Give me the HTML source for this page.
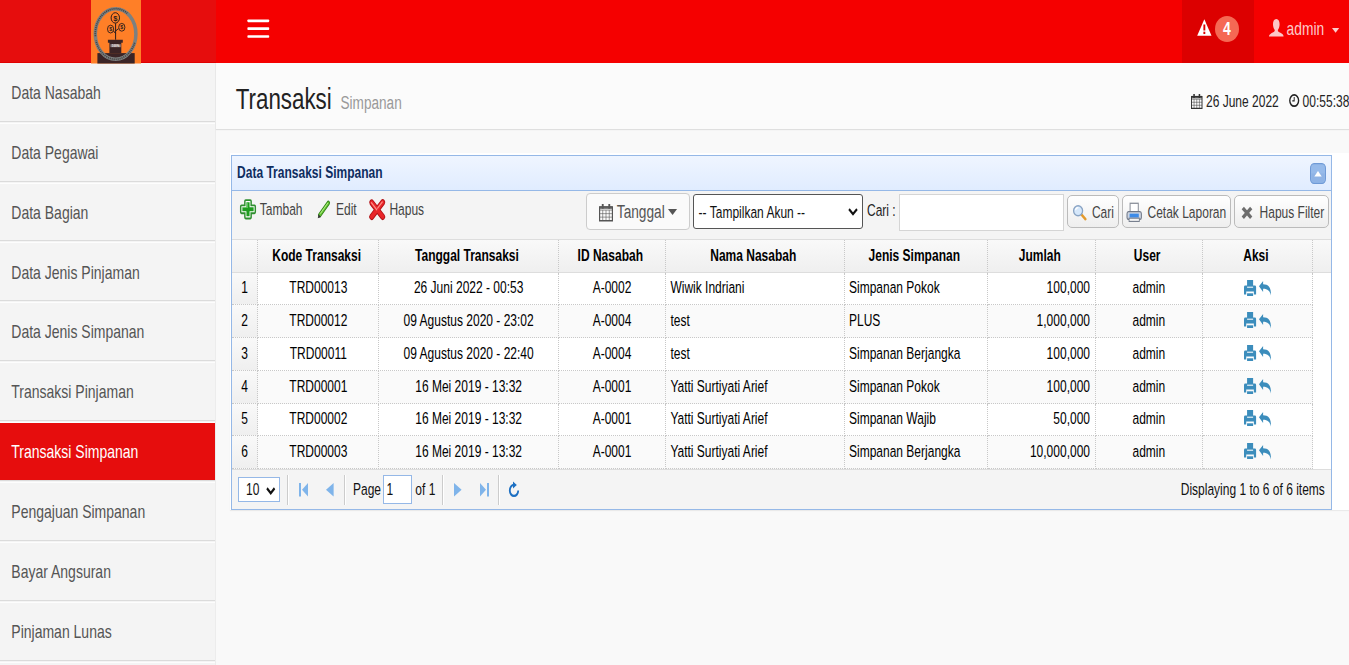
<!DOCTYPE html>
<html lang="id"><head><meta charset="utf-8"><title>Transaksi Simpanan</title>
<style>
html,body{margin:0;padding:0;background:#f9f9f9;overflow:hidden;width:1349px;height:665px}
body{font-family:"Liberation Sans",Arial,sans-serif;font-size:12px;color:#000}
#b{position:absolute;left:0;top:0;width:1349px;height:665px;overflow:hidden}
#w{position:absolute;left:0;top:0;width:1349px;height:508.13px;transform-origin:0 0;transform:scaleY(1.31);overflow:hidden}
.a{position:absolute;box-sizing:border-box}
.t{position:absolute;white-space:nowrap;line-height:1}
svg{position:absolute;overflow:visible}
.mi{position:absolute;box-sizing:border-box}
.cell{position:absolute;box-sizing:border-box;border-right:1px dotted #c8c8c8;border-bottom:1px dotted #c8c8c8}
.hd{border-bottom:1px solid #ddd}
.btn{position:absolute;box-sizing:border-box;border:1px solid #bbb;border-radius:5px;background:linear-gradient(#fff,#eee)}
.sep{position:absolute;box-sizing:border-box;border-left:1px solid #ccc;border-right:1px solid #fff}
</style></head><body>
<div id="b">
<div class="a" style="left:0px;top:0px;width:216px;height:62.5px;background:#e60d0d;border-bottom:1px solid #e00000"></div>
<div class="a" style="left:216px;top:0px;width:1133px;height:62.5px;background:#f50000"></div>
<div class="a" style="left:1182px;top:0px;width:71.5px;height:62.5px;background:#dc0000"></div>
<svg style="left:247px;top:0px" width="23" height="62" viewBox="247 0 23 62" preserveAspectRatio="none"><rect x="247.4" y="19.45" width="21.8" height="2.7" rx=".8" fill="#fff"/><rect x="247.4" y="27.299999999999997" width="21.8" height="2.7" rx=".8" fill="#fff"/><rect x="247.4" y="35.15" width="21.8" height="2.7" rx=".8" fill="#fff"/></svg>
<div class="a" style="left:0px;top:62.5px;width:215.3px;height:604.5px;background:#f4f4f4"></div>
<div class="a" style="left:215.3px;top:62.5px;width:1.0px;height:604.5px;background:#ececec"></div>
<div class="a" style="left:0px;top:120.76px;width:215.3px;height:1.0px;background:#dbdbdb"></div>
<div class="a" style="left:0px;top:122.76px;width:215.3px;height:1.0px;background:#fdfdfd"></div>
<div class="a" style="left:0px;top:180.62px;width:215.3px;height:1.0px;background:#dbdbdb"></div>
<div class="a" style="left:0px;top:182.62px;width:215.3px;height:1.0px;background:#fdfdfd"></div>
<div class="a" style="left:0px;top:240.48px;width:215.3px;height:1.0px;background:#dbdbdb"></div>
<div class="a" style="left:0px;top:242.48px;width:215.3px;height:1.0px;background:#fdfdfd"></div>
<div class="a" style="left:0px;top:300.34px;width:215.3px;height:1.0px;background:#dbdbdb"></div>
<div class="a" style="left:0px;top:302.34px;width:215.3px;height:1.0px;background:#fdfdfd"></div>
<div class="a" style="left:0px;top:360.2px;width:215.3px;height:1.0px;background:#dbdbdb"></div>
<div class="a" style="left:0px;top:362.2px;width:215.3px;height:1.0px;background:#fdfdfd"></div>
<div class="a" style="left:0px;top:420.06px;width:215.3px;height:1.0px;background:#dbdbdb"></div>
<div class="a" style="left:0px;top:422.06px;width:215.3px;height:1.0px;background:#fdfdfd"></div>
<div class="a" style="left:0px;top:423.06px;width:215.3px;height:56.86px;background:#e60d0d"></div>
<div class="a" style="left:0px;top:479.92px;width:215.3px;height:1.0px;background:#dbdbdb"></div>
<div class="a" style="left:0px;top:481.92px;width:215.3px;height:1.0px;background:#fdfdfd"></div>
<div class="a" style="left:0px;top:539.78px;width:215.3px;height:1.0px;background:#dbdbdb"></div>
<div class="a" style="left:0px;top:541.78px;width:215.3px;height:1.0px;background:#fdfdfd"></div>
<div class="a" style="left:0px;top:599.64px;width:215.3px;height:1.0px;background:#dbdbdb"></div>
<div class="a" style="left:0px;top:601.64px;width:215.3px;height:1.0px;background:#fdfdfd"></div>
<div class="a" style="left:0px;top:659.5px;width:215.3px;height:1.0px;background:#dbdbdb"></div>
<div class="a" style="left:0px;top:661.5px;width:215.3px;height:1.0px;background:#fdfdfd"></div>
<div class="a" style="left:0px;top:719.36px;width:215.3px;height:1.0px;background:#dbdbdb"></div>
<div class="a" style="left:0px;top:721.36px;width:215.3px;height:1.0px;background:#fdfdfd"></div>
<svg style="left:91px;top:0px" width="50" height="63.5" viewBox="0 0 50 63.5" preserveAspectRatio="none"><rect width="50" height="63.5" fill="#ff7f27"/><rect x="6.4" y="53.1" width="37.3" height="10.4" fill="#3b2426"/><ellipse cx="24.6" cy="34" rx="20.3" ry="25.3" fill="none" stroke="#7d8080" stroke-width="3.5"/><path d="M4.38 36.21L4.30 33.82L4.41 31.43L4.69 29.06L5.15 26.74L5.79 24.49L6.59 22.32L7.56 20.25L8.68 18.31L9.94 16.50L11.33 14.86L12.84 13.38L14.45 12.09L16.15 10.99L17.94 10.10L19.77 9.43L21.66 8.97L23.57 8.73L25.49 8.72L27.40 8.94L29.28 9.38L31.13 10.04L32.91 10.92L34.62 12.00L36.24 13.28" fill="none" stroke="#2e2a2a" stroke-width="1.7" stroke-dasharray="1.1 .9" opacity=".7"/><path d="M43.68 42.65L42.84 45.11L41.80 47.44L40.57 49.62L39.16 51.63L37.59 53.44L35.88 55.04L34.04 56.40L32.09 57.51L30.07 58.37L27.98 58.95L25.85 59.25L23.71 59.28L21.58 59.02L19.49 58.48L17.45 57.68L15.49 56.61L13.63 55.29L11.89 53.73L10.30 51.95L8.86 49.98L7.60 47.83L6.53 45.52L5.65 43.08L4.99 40.55" fill="none" stroke="#2e2a2a" stroke-width="1.7" stroke-dasharray="1.1 .9" opacity=".7"/><path d="M16.900 39.700h14.900v3h-1.500v10.400H18.400V42.700h-1.500z" fill="#3b2426"/><path d="M24.600 39.700V23.300M24.600 33.500l-2.500-3M24.600 31l3-2.500" stroke="#2a1c1c" stroke-width="1" fill="none"/><ellipse cx="24.3" cy="17.9" rx="4.2" ry="5.2" fill="#ff7f27" stroke="#2a1c1c" stroke-width="1"/><ellipse cx="19.6" cy="29.1" rx="3.1" ry="3.9" fill="#ff7f27" stroke="#2a1c1c" stroke-width=".9"/><ellipse cx="30.8" cy="27.3" rx="3.1" ry="3.9" fill="#ff7f27" stroke="#2a1c1c" stroke-width=".9"/><text x="24.3" y="20.6" font-size="7.5" font-weight="bold" text-anchor="middle" fill="#2a1c1c" font-family="Liberation Sans">$</text><text x="19.6" y="31" font-size="5.2" font-weight="bold" text-anchor="middle" fill="#2a1c1c" font-family="Liberation Sans">$</text><text x="30.8" y="29.2" font-size="5.2" font-weight="bold" text-anchor="middle" fill="#2a1c1c" font-family="Liberation Sans">$</text><rect x="19.4" y="44.2" width="10.4" height="3" fill="#a89a9a" opacity=".75"/><text x="24.6" y="46.900" font-size="3" font-weight="bold" text-anchor="middle" fill="#f4eeee" font-family="Liberation Sans">100%</text></svg>
<svg style="left:1196.7px;top:19.2px" width="14.7" height="17.0" viewBox="0 0 14.7 13" preserveAspectRatio="none"><path d="M7.35 0.2L14.5 12.8H0.2z" fill="#fff"/><rect x="6.4" y="4.2" width="1.9" height="4.6" fill="#dc0000"/><rect x="6.4" y="9.7" width="1.9" height="1.8" fill="#dc0000"/></svg>
<div class="a" style="left:1215px;top:15.6px;width:24px;height:26.0px;border-radius:12px/13px;background:#f56954"></div>
<svg style="left:1268.6px;top:18.9px" width="14.6" height="17.6" viewBox="0 0 14.6 13.6" preserveAspectRatio="none"><path d="M7.3 0C9.6 0 10.6 1.8 10.6 4c0 2-.9 3.600-1.800 4.500c0 1.200 1 1.600 2.600 2.200c1.800.7 3.200 1.300 3.200 2.900H0c0-1.600 1.400-2.200 3.200-2.900C4.800 10.100 5.800 9.700 5.800 8.500C4.900 7.600 4 6 4 4C4 1.800 5 0 7.300 0z" fill="#fff" opacity=".78"/></svg>
<svg style="left:1331.8px;top:27.5px" width="7.2" height="4.7" viewBox="0 0 8 4" preserveAspectRatio="none"><path d="M0 0h8L4 4z" fill="#fff" opacity=".8"/></svg>
<div class="a" style="left:216.3px;top:62.5px;width:1132.7px;height:66.7px;background:#fbfbfb;box-shadow:0 1px 1px rgba(0,0,0,.1)"></div>
<svg style="left:1191px;top:94px" width="11.5" height="15" viewBox="0 0 12 12" preserveAspectRatio="none"><path d="M0.500 2h11v9.500h-11z" fill="none" stroke="#333" stroke-width="1"/><path d="M0.500 4.200h11M0.500 6.600h11M0.500 9h11M3.200 4.200v7.300M6 4.200v7.300M8.800 4.200v7.300" stroke="#333" stroke-width=".45"/><rect x="0.500" y="1.500" width="11" height="2" fill="#333" opacity=".75"/><rect x="2.400" y="0" width="1.600" height="3.200" fill="#333"/><rect x="8" y="0" width="1.600" height="3.200" fill="#333"/></svg>
<svg style="left:1288.6px;top:94.4px" width="10.4" height="13.2" viewBox="0 0 12 12" preserveAspectRatio="none"><circle cx="6" cy="6" r="5.100" fill="none" stroke="#222" stroke-width="1.600"/><path d="M6 2.800v3.500H3.800" fill="none" stroke="#222" stroke-width="1.100"/></svg>
<div class="a" style="left:230px;top:153.2px;width:1119px;height:357.1px;background:#fff;box-shadow:0 1px 1px rgba(0,0,0,.06)"></div>
<div class="a" style="left:231.2px;top:154.85px;width:1100.7px;height:355.0px;border:1px solid #95b8e7;background:#fff"></div>
<div class="a" style="left:232.2px;top:155.85px;width:1098.7px;height:35.3px;background:linear-gradient(#eff5ff,#e0ecff);border-bottom:1px solid #95b8e7"></div>
<svg style="left:1310px;top:162.8px" width="16" height="21.0" viewBox="0 0 16 16" preserveAspectRatio="none"><rect x=".5" y=".5" width="15" height="15" rx="3.500" fill="#96baea" stroke="#6f9ad6"/><path d="M1.500 8h13v4.500a2 2 0 0 1-2 2h-9a2 2 0 0 1-2-2z" fill="#8cb0e2" opacity=".7"/><path d="M4.300 10.300L8 6l3.700 4.300z" fill="#fff"/></svg>
<div class="a" style="left:232.2px;top:191.15px;width:1098.7px;height:49.0px;background:#f4f4f4;border-bottom:1px solid #ddd"></div>
<svg style="left:238.6px;top:198.4px" width="18.0" height="22.6" viewBox="0 0 16 16" preserveAspectRatio="none"><path d="M6 1.500h4a.8.8 0 0 1 .8.800V5.200h2.900a.8.8 0 0 1 .8.800v4a.8.8 0 0 1-.8.800h-2.900v2.900a.8.8 0 0 1-.8.800H6a.8.8 0 0 1-.8-.800v-2.900H2.300a.8.8 0 0 1-.8-.800V6a.8.8 0 0 1 .8-.800h2.900V2.300A.8.8 0 0 1 6 1.500z" fill="#fff" stroke="#2f8f2f" stroke-width="1.300"/><path d="M6.600 3h2.800v3.600H13v2.800H9.400V13H6.600V9.400H3V6.600h3.600z" fill="#1f9c1f"/><path d="M7 3.400h1v3.600H3.400v-.4H7z" fill="#7fe07a" opacity=".6"/></svg>
<svg style="left:316.3px;top:198.8px" width="16.0" height="21.0" viewBox="0 0 16 16" preserveAspectRatio="none"><path d="M3.800 12.200L12.300 3" stroke="#2d7d16" stroke-width="3.400" stroke-linecap="round"/><path d="M3.800 12.200L12.300 3" stroke="#62c332" stroke-width="2" stroke-linecap="round"/><path d="M4.300 11.200L11.800 3.100" stroke="#c9f59e" stroke-width=".7"/><path d="M1.800 14.600l.8-3 2.300 2.100z" fill="#333"/></svg>
<svg style="left:368.4px;top:198px" width="18.4" height="22.8" viewBox="0 0 16 16" preserveAspectRatio="none"><path d="M3.200 3.200l9.600 10M12.800 3l-9.600 10.200" stroke="#b01116" stroke-width="4.400" stroke-linecap="round"/><path d="M3.200 3.200l9.600 10M12.800 3l-9.600 10.200" stroke="#e8262a" stroke-width="3" stroke-linecap="round"/><path d="M3 3.400l4.600 4.800M12.400 2.800l-4 4.300" stroke="#ff8d85" stroke-width="1" stroke-linecap="round"/></svg>
<div class="a" style="left:586.4px;top:193.3px;width:103.2px;height:37.2px;border:1px solid #ccc;border-radius:4px;background:#fafafa"></div>
<svg style="left:598.5px;top:203.5px" width="14.0" height="17.5" viewBox="0 0 12 12" preserveAspectRatio="none"><path d="M0.500 2h11v9.500h-11z" fill="none" stroke="#555" stroke-width="1"/><path d="M0.500 4.200h11M0.500 6.600h11M0.500 9h11M3.200 4.200v7.300M6 4.200v7.300M8.800 4.200v7.300" stroke="#555" stroke-width=".45"/><rect x="0.500" y="1.500" width="11" height="2" fill="#555" opacity=".75"/><rect x="2.400" y="0" width="1.600" height="3.200" fill="#555"/><rect x="8" y="0" width="1.600" height="3.200" fill="#555"/></svg>
<svg style="left:668.2px;top:209.4px" width="9.1" height="6.0" viewBox="0 0 8 4" preserveAspectRatio="none"><path d="M0 0h8L4 4z" fill="#555"/></svg>
<div class="a" style="left:693.4px;top:194px;width:169.6px;height:34.9px;border:1px solid #555;border-radius:3px;background:#fff"></div>
<svg style="left:848px;top:207.5px" width="10" height="7.2" viewBox="0 0 10 6" preserveAspectRatio="none"><path d="M1 1l4 4 4-4" fill="none" stroke="#111" stroke-width="2"/></svg>
<div class="a" style="left:899px;top:194.3px;width:164.6px;height:36.3px;border:1px solid #d5d5d5;background:#fff"></div>
<div class="btn" style="left:1066.8px;top:195px;width:51.8px;height:33.4px;"></div>
<div class="btn" style="left:1122px;top:195px;width:108.7px;height:33.4px;"></div>
<div class="btn" style="left:1234px;top:195px;width:94.8px;height:33.4px;"></div>
<svg style="left:1072.4px;top:203.9px" width="15.0" height="16.7" viewBox="0 0 16 16" preserveAspectRatio="none"><path d="M9.500 9.500l4.800 5" stroke="#e39a2c" stroke-width="2.600" stroke-linecap="round"/><circle cx="6.500" cy="6.500" r="4.800" fill="#d6e8fb" stroke="#8aa4c4" stroke-width="1.400"/><path d="M3.800 6a3 3 0 0 1 3-2.600" stroke="#fff" stroke-width="1.200" fill="none"/></svg>
<svg style="left:1126.4px;top:201.7px" width="16.4" height="20.7" viewBox="0 0 16 16" preserveAspectRatio="none"><rect x="4" y="1" width="8" height="7" fill="#fff" stroke="#8a8f99" stroke-width="1"/><rect x="1" y="7.500" width="14" height="6" rx="1.500" fill="#cfd6e2" stroke="#6d7686" stroke-width="1"/><rect x="3.500" y="9" width="9" height="3" fill="#3d8be8"/><rect x="3" y="12.500" width="10" height="2.500" fill="#f4f4f4" stroke="#6d7686" stroke-width=".8"/></svg>
<svg style="left:1241px;top:205.5px" width="12" height="13.8" viewBox="0 0 12 12" preserveAspectRatio="none"><path d="M1.800 1.800l8.400 8.400M10.200 1.800l-8.400 8.400" stroke="#6e6e6e" stroke-width="3.200"/></svg>
<div class="a" style="left:232.2px;top:240.15px;width:1098.7px;height:32.48px;background:linear-gradient(#f9f9f9,#efefef);border-bottom:1px solid #ddd"></div>
<div class="cell hd" style="left:232.2px;top:240.15px;width:26.0px;height:32.48px;"></div>
<div class="cell hd" style="left:258.2px;top:240.15px;width:121.3px;height:32.48px;"></div>
<div class="cell hd" style="left:379.5px;top:240.15px;width:179.3px;height:32.48px;"></div>
<div class="cell hd" style="left:558.8px;top:240.15px;width:107.4px;height:32.48px;"></div>
<div class="cell hd" style="left:666.2px;top:240.15px;width:178.6px;height:32.48px;"></div>
<div class="cell hd" style="left:844.8px;top:240.15px;width:143.4px;height:32.48px;"></div>
<div class="cell hd" style="left:988.2px;top:240.15px;width:107.5px;height:32.48px;"></div>
<div class="cell hd" style="left:1095.7px;top:240.15px;width:107.3px;height:32.48px;"></div>
<div class="cell hd" style="left:1203.0px;top:240.15px;width:110.3px;height:32.48px;"></div>
<div class="a" style="left:232.2px;top:272.63px;width:1081.1px;height:32.72px;background:#fff"></div>
<div class="cell" style="left:232.2px;top:272.63px;width:26.0px;height:32.72px;background:linear-gradient(#f9f9f9,#efefef)"></div>
<div class="cell" style="left:258.2px;top:272.63px;width:121.3px;height:32.72px;"></div>
<div class="cell" style="left:379.5px;top:272.63px;width:179.3px;height:32.72px;"></div>
<div class="cell" style="left:558.8px;top:272.63px;width:107.4px;height:32.72px;"></div>
<div class="cell" style="left:666.2px;top:272.63px;width:178.6px;height:32.72px;"></div>
<div class="cell" style="left:844.8px;top:272.63px;width:143.4px;height:32.72px;"></div>
<div class="cell" style="left:988.2px;top:272.63px;width:107.5px;height:32.72px;"></div>
<div class="cell" style="left:1095.7px;top:272.63px;width:107.3px;height:32.72px;"></div>
<div class="cell" style="left:1203.0px;top:272.63px;width:110.3px;height:32.72px;"></div>
<svg style="left:1243.8px;top:279.53px" width="12.1" height="16.0" viewBox="0 0 13 16" preserveAspectRatio="none"><path d="M3.300 0h6.500v6H3.300z" fill="#3c8dbc"/><path d="M0 7a1.400 1.400 0 0 1 1.400-1.400h10.200A1.400 1.400 0 0 1 13 7v7.400h-2.400V11.500H2.400v2.900H0z" fill="#3c8dbc"/><rect x="3.300" y="6.600" width="6.500" height="1.300" fill="#fff" opacity=".8"/><rect x="3.300" y="13.300" width="6.500" height="2.700" fill="#3c8dbc"/></svg>
<svg style="left:1259.3px;top:280.93px" width="12.4" height="14.4" viewBox="0 0 13 15" preserveAspectRatio="none"><path d="M4.300 0v3.300C9.600 3.300 13 6.200 12.500 15C11.500 10.600 9.200 8.200 4.300 8.200v3.300L0 5.600z" fill="#3c8dbc"/></svg>
<div class="a" style="left:232.2px;top:305.35px;width:1081.1px;height:32.72px;background:#fafafa"></div>
<div class="cell" style="left:232.2px;top:305.35px;width:26.0px;height:32.72px;background:linear-gradient(#f9f9f9,#efefef)"></div>
<div class="cell" style="left:258.2px;top:305.35px;width:121.3px;height:32.72px;"></div>
<div class="cell" style="left:379.5px;top:305.35px;width:179.3px;height:32.72px;"></div>
<div class="cell" style="left:558.8px;top:305.35px;width:107.4px;height:32.72px;"></div>
<div class="cell" style="left:666.2px;top:305.35px;width:178.6px;height:32.72px;"></div>
<div class="cell" style="left:844.8px;top:305.35px;width:143.4px;height:32.72px;"></div>
<div class="cell" style="left:988.2px;top:305.35px;width:107.5px;height:32.72px;"></div>
<div class="cell" style="left:1095.7px;top:305.35px;width:107.3px;height:32.72px;"></div>
<div class="cell" style="left:1203.0px;top:305.35px;width:110.3px;height:32.72px;"></div>
<svg style="left:1243.8px;top:312.25px" width="12.1" height="16.0" viewBox="0 0 13 16" preserveAspectRatio="none"><path d="M3.300 0h6.500v6H3.300z" fill="#3c8dbc"/><path d="M0 7a1.400 1.400 0 0 1 1.400-1.400h10.200A1.400 1.400 0 0 1 13 7v7.400h-2.400V11.500H2.400v2.900H0z" fill="#3c8dbc"/><rect x="3.300" y="6.600" width="6.500" height="1.300" fill="#fff" opacity=".8"/><rect x="3.300" y="13.300" width="6.500" height="2.700" fill="#3c8dbc"/></svg>
<svg style="left:1259.3px;top:313.65px" width="12.4" height="14.4" viewBox="0 0 13 15" preserveAspectRatio="none"><path d="M4.300 0v3.300C9.600 3.300 13 6.200 12.500 15C11.500 10.600 9.200 8.200 4.300 8.200v3.300L0 5.600z" fill="#3c8dbc"/></svg>
<div class="a" style="left:232.2px;top:338.07px;width:1081.1px;height:32.72px;background:#fff"></div>
<div class="cell" style="left:232.2px;top:338.07px;width:26.0px;height:32.72px;background:linear-gradient(#f9f9f9,#efefef)"></div>
<div class="cell" style="left:258.2px;top:338.07px;width:121.3px;height:32.72px;"></div>
<div class="cell" style="left:379.5px;top:338.07px;width:179.3px;height:32.72px;"></div>
<div class="cell" style="left:558.8px;top:338.07px;width:107.4px;height:32.72px;"></div>
<div class="cell" style="left:666.2px;top:338.07px;width:178.6px;height:32.72px;"></div>
<div class="cell" style="left:844.8px;top:338.07px;width:143.4px;height:32.72px;"></div>
<div class="cell" style="left:988.2px;top:338.07px;width:107.5px;height:32.72px;"></div>
<div class="cell" style="left:1095.7px;top:338.07px;width:107.3px;height:32.72px;"></div>
<div class="cell" style="left:1203.0px;top:338.07px;width:110.3px;height:32.72px;"></div>
<svg style="left:1243.8px;top:344.97px" width="12.1" height="16.0" viewBox="0 0 13 16" preserveAspectRatio="none"><path d="M3.300 0h6.500v6H3.300z" fill="#3c8dbc"/><path d="M0 7a1.400 1.400 0 0 1 1.400-1.400h10.200A1.400 1.400 0 0 1 13 7v7.400h-2.400V11.500H2.400v2.900H0z" fill="#3c8dbc"/><rect x="3.300" y="6.600" width="6.500" height="1.300" fill="#fff" opacity=".8"/><rect x="3.300" y="13.300" width="6.500" height="2.700" fill="#3c8dbc"/></svg>
<svg style="left:1259.3px;top:346.37px" width="12.4" height="14.4" viewBox="0 0 13 15" preserveAspectRatio="none"><path d="M4.300 0v3.300C9.600 3.300 13 6.200 12.500 15C11.500 10.600 9.200 8.200 4.300 8.200v3.300L0 5.600z" fill="#3c8dbc"/></svg>
<div class="a" style="left:232.2px;top:370.79px;width:1081.1px;height:32.72px;background:#fafafa"></div>
<div class="cell" style="left:232.2px;top:370.79px;width:26.0px;height:32.72px;background:linear-gradient(#f9f9f9,#efefef)"></div>
<div class="cell" style="left:258.2px;top:370.79px;width:121.3px;height:32.72px;"></div>
<div class="cell" style="left:379.5px;top:370.79px;width:179.3px;height:32.72px;"></div>
<div class="cell" style="left:558.8px;top:370.79px;width:107.4px;height:32.72px;"></div>
<div class="cell" style="left:666.2px;top:370.79px;width:178.6px;height:32.72px;"></div>
<div class="cell" style="left:844.8px;top:370.79px;width:143.4px;height:32.72px;"></div>
<div class="cell" style="left:988.2px;top:370.79px;width:107.5px;height:32.72px;"></div>
<div class="cell" style="left:1095.7px;top:370.79px;width:107.3px;height:32.72px;"></div>
<div class="cell" style="left:1203.0px;top:370.79px;width:110.3px;height:32.72px;"></div>
<svg style="left:1243.8px;top:377.69px" width="12.1" height="16.0" viewBox="0 0 13 16" preserveAspectRatio="none"><path d="M3.300 0h6.500v6H3.300z" fill="#3c8dbc"/><path d="M0 7a1.400 1.400 0 0 1 1.400-1.400h10.200A1.400 1.400 0 0 1 13 7v7.400h-2.400V11.500H2.400v2.900H0z" fill="#3c8dbc"/><rect x="3.300" y="6.600" width="6.500" height="1.300" fill="#fff" opacity=".8"/><rect x="3.300" y="13.300" width="6.500" height="2.700" fill="#3c8dbc"/></svg>
<svg style="left:1259.3px;top:379.09px" width="12.4" height="14.4" viewBox="0 0 13 15" preserveAspectRatio="none"><path d="M4.300 0v3.300C9.600 3.300 13 6.200 12.500 15C11.500 10.600 9.200 8.200 4.300 8.200v3.300L0 5.600z" fill="#3c8dbc"/></svg>
<div class="a" style="left:232.2px;top:403.51px;width:1081.1px;height:32.72px;background:#fff"></div>
<div class="cell" style="left:232.2px;top:403.51px;width:26.0px;height:32.72px;background:linear-gradient(#f9f9f9,#efefef)"></div>
<div class="cell" style="left:258.2px;top:403.51px;width:121.3px;height:32.72px;"></div>
<div class="cell" style="left:379.5px;top:403.51px;width:179.3px;height:32.72px;"></div>
<div class="cell" style="left:558.8px;top:403.51px;width:107.4px;height:32.72px;"></div>
<div class="cell" style="left:666.2px;top:403.51px;width:178.6px;height:32.72px;"></div>
<div class="cell" style="left:844.8px;top:403.51px;width:143.4px;height:32.72px;"></div>
<div class="cell" style="left:988.2px;top:403.51px;width:107.5px;height:32.72px;"></div>
<div class="cell" style="left:1095.7px;top:403.51px;width:107.3px;height:32.72px;"></div>
<div class="cell" style="left:1203.0px;top:403.51px;width:110.3px;height:32.72px;"></div>
<svg style="left:1243.8px;top:410.41px" width="12.1" height="16.0" viewBox="0 0 13 16" preserveAspectRatio="none"><path d="M3.300 0h6.500v6H3.300z" fill="#3c8dbc"/><path d="M0 7a1.400 1.400 0 0 1 1.400-1.400h10.200A1.400 1.400 0 0 1 13 7v7.400h-2.400V11.500H2.400v2.900H0z" fill="#3c8dbc"/><rect x="3.300" y="6.600" width="6.500" height="1.300" fill="#fff" opacity=".8"/><rect x="3.300" y="13.300" width="6.500" height="2.700" fill="#3c8dbc"/></svg>
<svg style="left:1259.3px;top:411.81px" width="12.4" height="14.4" viewBox="0 0 13 15" preserveAspectRatio="none"><path d="M4.300 0v3.300C9.600 3.300 13 6.200 12.500 15C11.500 10.600 9.200 8.200 4.300 8.200v3.300L0 5.600z" fill="#3c8dbc"/></svg>
<div class="a" style="left:232.2px;top:436.23px;width:1081.1px;height:32.72px;background:#fafafa"></div>
<div class="cell" style="left:232.2px;top:436.23px;width:26.0px;height:32.72px;background:linear-gradient(#f9f9f9,#efefef)"></div>
<div class="cell" style="left:258.2px;top:436.23px;width:121.3px;height:32.72px;"></div>
<div class="cell" style="left:379.5px;top:436.23px;width:179.3px;height:32.72px;"></div>
<div class="cell" style="left:558.8px;top:436.23px;width:107.4px;height:32.72px;"></div>
<div class="cell" style="left:666.2px;top:436.23px;width:178.6px;height:32.72px;"></div>
<div class="cell" style="left:844.8px;top:436.23px;width:143.4px;height:32.72px;"></div>
<div class="cell" style="left:988.2px;top:436.23px;width:107.5px;height:32.72px;"></div>
<div class="cell" style="left:1095.7px;top:436.23px;width:107.3px;height:32.72px;"></div>
<div class="cell" style="left:1203.0px;top:436.23px;width:110.3px;height:32.72px;"></div>
<svg style="left:1243.8px;top:443.13px" width="12.1" height="16.0" viewBox="0 0 13 16" preserveAspectRatio="none"><path d="M3.300 0h6.500v6H3.300z" fill="#3c8dbc"/><path d="M0 7a1.400 1.400 0 0 1 1.400-1.400h10.200A1.400 1.400 0 0 1 13 7v7.400h-2.400V11.500H2.400v2.900H0z" fill="#3c8dbc"/><rect x="3.300" y="6.600" width="6.500" height="1.300" fill="#fff" opacity=".8"/><rect x="3.300" y="13.300" width="6.500" height="2.700" fill="#3c8dbc"/></svg>
<svg style="left:1259.3px;top:444.53px" width="12.4" height="14.4" viewBox="0 0 13 15" preserveAspectRatio="none"><path d="M4.300 0v3.300C9.600 3.300 13 6.200 12.500 15C11.500 10.600 9.200 8.200 4.300 8.200v3.300L0 5.600z" fill="#3c8dbc"/></svg>
<div class="a" style="left:232.2px;top:469.1px;width:1098.7px;height:39.75px;background:#f4f4f4;border-top:1px solid #ddd"></div>
<div class="a" style="left:238.1px;top:476.5px;width:42.3px;height:25.2px;border:1px solid #95b8e7;background:#fff"></div>
<svg style="left:265.5px;top:486.5px" width="9.5" height="7.5" viewBox="0 0 10 6" preserveAspectRatio="none"><path d="M1 1l4 4 4-4" fill="none" stroke="#111" stroke-width="2"/></svg>
<div class="sep" style="left:287px;top:474.5px;width:2px;height:30.0px;"></div>
<div class="sep" style="left:343.5px;top:474.5px;width:2.0px;height:30.0px;"></div>
<div class="sep" style="left:441.7px;top:474.5px;width:2.0px;height:30.0px;"></div>
<div class="sep" style="left:498px;top:474.5px;width:2px;height:30.0px;"></div>
<svg style="left:298.8px;top:483px" width="9.0" height="13.5" viewBox="0 0 9 10" preserveAspectRatio="none"><rect x="0" y="0" width="2" height="10" fill="#7fb4ea"/><path d="M9 0v10L3 5z" fill="#7fb4ea"/></svg>
<svg style="left:325.8px;top:483px" width="7.6" height="13.5" viewBox="0 0 7 10" preserveAspectRatio="none"><path d="M7 0v10L0 5z" fill="#7fb4ea"/></svg>
<div class="a" style="left:382.5px;top:475.3px;width:29.7px;height:29.0px;border:1px solid #95b8e7;background:#fff"></div>
<svg style="left:453.8px;top:483px" width="7.6" height="13.5" viewBox="0 0 7 10" preserveAspectRatio="none"><path d="M0 0v10L7 5z" fill="#7fb4ea"/></svg>
<svg style="left:479.5px;top:483px" width="9.0" height="13.5" viewBox="0 0 9 10" preserveAspectRatio="none"><rect x="7" y="0" width="2" height="10" fill="#7fb4ea"/><path d="M0 0v10L6 5z" fill="#7fb4ea"/></svg>
<svg style="left:508px;top:480.5px" width="12" height="17.0" viewBox="0 0 12 13" preserveAspectRatio="none"><path d="M6 3a4.200 4.200 0 1 0 4.200 4.200" fill="none" stroke="#1c6fc2" stroke-width="1.800"/><path d="M5 0.300L8.800 3 5 5.700z" fill="#1c6fc2"/></svg>
</div>
<div id="w">
<div class="t" style="left:11px;top:63px;font-size:14px;color:#555;transform:translate(0.3px,0.569px);transform-origin:0 0">Data Nasabah</div>
<div class="t" style="left:11px;top:109px;font-size:14px;color:#555;transform:translate(0.3px,0.264px);transform-origin:0 0">Data Pegawai</div>
<div class="t" style="left:11px;top:154px;font-size:14px;color:#555;transform:translate(0.3px,0.958px);transform-origin:0 0">Data Bagian</div>
<div class="t" style="left:11px;top:200px;font-size:14px;color:#555;transform:translate(0.3px,0.653px);transform-origin:0 0">Data Jenis Pinjaman</div>
<div class="t" style="left:11px;top:246px;font-size:14px;color:#555;transform:translate(0.3px,0.347px);transform-origin:0 0">Data Jenis Simpanan</div>
<div class="t" style="left:11px;top:292px;font-size:14px;color:#555;transform:translate(0.3px,0.042px);transform-origin:0 0">Transaksi Pinjaman</div>
<div class="t" style="left:11px;top:337px;font-size:14px;color:#fff;transform:translate(0.3px,0.737px);transform-origin:0 0">Transaksi Simpanan</div>
<div class="t" style="left:11px;top:383px;font-size:14px;color:#555;transform:translate(0.3px,0.431px);transform-origin:0 0">Pengajuan Simpanan</div>
<div class="t" style="left:11px;top:429px;font-size:14px;color:#555;transform:translate(0.3px,0.126px);transform-origin:0 0">Bayar Angsuran</div>
<div class="t" style="left:11px;top:474px;font-size:14px;color:#555;transform:translate(0.3px,0.821px);transform-origin:0 0">Pinjaman Lunas</div>
<div class="t" style="left:11px;top:520px;font-size:14px;color:#555;transform:translate(0.3px,0.515px);transform-origin:0 0">Laporan</div>
<div class="t" style="left:1215px;width:24px;text-align:center;top:15px;font-size:14px;color:#fff;font-weight:bold;transform:translate(0,0.019px);transform-origin:50% 0">4</div>
<div class="t" style="left:1286px;top:15px;font-size:14px;color:rgba(255,255,255,.8);transform:translate(0.6px,0.096px) scaleX(0.985);transform-origin:0 0">admin</div>
<div class="t" style="left:235px;top:64px;font-size:22.8px;color:#222;transform:translate(0.7px,0.517px) scaleX(0.98);transform-origin:0 0">Transaksi</div>
<div class="t" style="left:340px;top:71px;font-size:13.6px;color:#999;transform:translate(0.5px,0.923px);transform-origin:0 0">Simpanan</div>
<div class="t" style="left:1206px;top:71px;font-size:12px;color:#222;transform:translate(0px,0.521px);transform-origin:0 0">26 June 2022</div>
<div class="t" style="left:1302px;top:71px;font-size:12px;color:#222;transform:translate(0.6px,0.521px);transform-origin:0 0">00:55:38</div>
<div class="t" style="left:237px;top:125px;font-size:12px;color:#0e2d5f;font-weight:bold;transform:translate(0.1px,0.949px);transform-origin:0 0">Data Transaksi Simpanan</div>
<div class="t" style="left:259px;top:154px;font-size:12px;color:#444;transform:translate(0.8px,0.422px);transform-origin:0 0">Tambah</div>
<div class="t" style="left:336px;top:154px;font-size:12px;color:#444;transform:translate(0px,0.422px);transform-origin:0 0">Edit</div>
<div class="t" style="left:389px;top:154px;font-size:12px;color:#444;transform:translate(0.4px,0.422px);transform-origin:0 0">Hapus</div>
<div class="t" style="left:616px;top:155px;font-size:13.7px;color:#555;transform:translate(0.8px,0.502px);transform-origin:0 0">Tanggal</div>
<div class="t" style="left:698px;top:156px;font-size:12px;color:#111;transform:translate(0.6px,0.254px);transform-origin:0 0">-- Tampilkan Akun --</div>
<div class="t" style="left:867px;top:154px;font-size:12px;color:#222;transform:translate(0px,0.575px);transform-origin:0 0">Cari :</div>
<div class="t" style="left:1091px;top:156px;font-size:12px;color:#444;transform:translate(0.9px,0.331px);transform-origin:0 0">Cari</div>
<div class="t" style="left:1147px;top:156px;font-size:12px;color:#444;transform:translate(0.5px,0.331px);transform-origin:0 0">Cetak Laporan</div>
<div class="t" style="left:1259px;top:156px;font-size:12px;color:#444;transform:translate(0.6px,0.331px);transform-origin:0 0">Hapus Filter</div>
<div class="t" style="left:255.5px;width:122.3px;text-align:center;top:189px;font-size:12px;color:#000;font-weight:bold;transform:translate(0,0.155px);transform-origin:50% 0">Kode Transaksi</div>
<div class="t" style="left:376.8px;width:180.3px;text-align:center;top:189px;font-size:12px;color:#000;font-weight:bold;transform:translate(0,0.155px);transform-origin:50% 0">Tanggal Transaksi</div>
<div class="t" style="left:556.1px;width:108.4px;text-align:center;top:189px;font-size:12px;color:#000;font-weight:bold;transform:translate(0,0.155px);transform-origin:50% 0">ID Nasabah</div>
<div class="t" style="left:663.5px;width:179.6px;text-align:center;top:189px;font-size:12px;color:#000;font-weight:bold;transform:translate(0,0.155px);transform-origin:50% 0">Nama Nasabah</div>
<div class="t" style="left:842.1px;width:144.4px;text-align:center;top:189px;font-size:12px;color:#000;font-weight:bold;transform:translate(0,0.155px);transform-origin:50% 0">Jenis Simpanan</div>
<div class="t" style="left:985.5px;width:108.5px;text-align:center;top:189px;font-size:12px;color:#000;font-weight:bold;transform:translate(0,0.155px);transform-origin:50% 0">Jumlah</div>
<div class="t" style="left:1093.0px;width:108.3px;text-align:center;top:189px;font-size:12px;color:#000;font-weight:bold;transform:translate(0,0.155px);transform-origin:50% 0">User</div>
<div class="t" style="left:1200.3px;width:111.3px;text-align:center;top:189px;font-size:12px;color:#000;font-weight:bold;transform:translate(0,0.155px);transform-origin:50% 0">Aksi</div>
<div class="t" style="left:231.2px;width:27.0px;text-align:center;top:213px;font-size:12px;color:#000;transform:translate(0,0.987px);transform-origin:50% 0">1</div>
<div class="t" style="left:257.2px;width:122.3px;text-align:center;top:213px;font-size:12px;color:#000;transform:translate(0,0.987px);transform-origin:50% 0">TRD00013</div>
<div class="t" style="left:378.5px;width:180.3px;text-align:center;top:213px;font-size:12px;color:#000;transform:translate(0,0.987px);transform-origin:50% 0">26 Juni 2022 - 00:53</div>
<div class="t" style="left:557.8px;width:108.4px;text-align:center;top:213px;font-size:12px;color:#000;transform:translate(0,0.987px);transform-origin:50% 0">A-0002</div>
<div class="t" style="left:670px;top:213px;font-size:12px;color:#000;transform:translate(0.4px,0.987px);transform-origin:0 0">Wiwik Indriani</div>
<div class="t" style="left:849px;top:213px;font-size:12px;color:#000;transform:translate(0.0px,0.987px);transform-origin:0 0">Simpanan Pokok</div>
<div class="t" style="right:259.0px;top:213px;font-size:12px;color:#000;transform:translate(0,0.987px);transform-origin:100% 0">100,000</div>
<div class="t" style="left:1094.7px;width:108.3px;text-align:center;top:213px;font-size:12px;color:#000;transform:translate(0,0.987px);transform-origin:50% 0">admin</div>
<div class="t" style="left:231.2px;width:27.0px;text-align:center;top:238px;font-size:12px;color:#000;transform:translate(0,0.964px);transform-origin:50% 0">2</div>
<div class="t" style="left:257.2px;width:122.3px;text-align:center;top:238px;font-size:12px;color:#000;transform:translate(0,0.964px);transform-origin:50% 0">TRD00012</div>
<div class="t" style="left:378.5px;width:180.3px;text-align:center;top:238px;font-size:12px;color:#000;transform:translate(0,0.964px);transform-origin:50% 0">09 Agustus 2020 - 23:02</div>
<div class="t" style="left:557.8px;width:108.4px;text-align:center;top:238px;font-size:12px;color:#000;transform:translate(0,0.964px);transform-origin:50% 0">A-0004</div>
<div class="t" style="left:670px;top:238px;font-size:12px;color:#000;transform:translate(0.4px,0.964px);transform-origin:0 0">test</div>
<div class="t" style="left:849px;top:238px;font-size:12px;color:#000;transform:translate(0.0px,0.964px);transform-origin:0 0">PLUS</div>
<div class="t" style="right:259.0px;top:238px;font-size:12px;color:#000;transform:translate(0,0.964px);transform-origin:100% 0">1,000,000</div>
<div class="t" style="left:1094.7px;width:108.3px;text-align:center;top:238px;font-size:12px;color:#000;transform:translate(0,0.964px);transform-origin:50% 0">admin</div>
<div class="t" style="left:231.2px;width:27.0px;text-align:center;top:263px;font-size:12px;color:#000;transform:translate(0,0.941px);transform-origin:50% 0">3</div>
<div class="t" style="left:257.2px;width:122.3px;text-align:center;top:263px;font-size:12px;color:#000;transform:translate(0,0.941px);transform-origin:50% 0">TRD00011</div>
<div class="t" style="left:378.5px;width:180.3px;text-align:center;top:263px;font-size:12px;color:#000;transform:translate(0,0.941px);transform-origin:50% 0">09 Agustus 2020 - 22:40</div>
<div class="t" style="left:557.8px;width:108.4px;text-align:center;top:263px;font-size:12px;color:#000;transform:translate(0,0.941px);transform-origin:50% 0">A-0004</div>
<div class="t" style="left:670px;top:263px;font-size:12px;color:#000;transform:translate(0.4px,0.941px);transform-origin:0 0">test</div>
<div class="t" style="left:849px;top:263px;font-size:12px;color:#000;transform:translate(0.0px,0.941px);transform-origin:0 0">Simpanan Berjangka</div>
<div class="t" style="right:259.0px;top:263px;font-size:12px;color:#000;transform:translate(0,0.941px);transform-origin:100% 0">100,000</div>
<div class="t" style="left:1094.7px;width:108.3px;text-align:center;top:263px;font-size:12px;color:#000;transform:translate(0,0.941px);transform-origin:50% 0">admin</div>
<div class="t" style="left:231.2px;width:27.0px;text-align:center;top:288px;font-size:12px;color:#000;transform:translate(0,0.918px);transform-origin:50% 0">4</div>
<div class="t" style="left:257.2px;width:122.3px;text-align:center;top:288px;font-size:12px;color:#000;transform:translate(0,0.918px);transform-origin:50% 0">TRD00001</div>
<div class="t" style="left:378.5px;width:180.3px;text-align:center;top:288px;font-size:12px;color:#000;transform:translate(0,0.918px);transform-origin:50% 0">16 Mei 2019 - 13:32</div>
<div class="t" style="left:557.8px;width:108.4px;text-align:center;top:288px;font-size:12px;color:#000;transform:translate(0,0.918px);transform-origin:50% 0">A-0001</div>
<div class="t" style="left:670px;top:288px;font-size:12px;color:#000;transform:translate(0.4px,0.918px);transform-origin:0 0">Yatti Surtiyati Arief</div>
<div class="t" style="left:849px;top:288px;font-size:12px;color:#000;transform:translate(0.0px,0.918px);transform-origin:0 0">Simpanan Pokok</div>
<div class="t" style="right:259.0px;top:288px;font-size:12px;color:#000;transform:translate(0,0.918px);transform-origin:100% 0">100,000</div>
<div class="t" style="left:1094.7px;width:108.3px;text-align:center;top:288px;font-size:12px;color:#000;transform:translate(0,0.918px);transform-origin:50% 0">admin</div>
<div class="t" style="left:231.2px;width:27.0px;text-align:center;top:313px;font-size:12px;color:#000;transform:translate(0,0.895px);transform-origin:50% 0">5</div>
<div class="t" style="left:257.2px;width:122.3px;text-align:center;top:313px;font-size:12px;color:#000;transform:translate(0,0.895px);transform-origin:50% 0">TRD00002</div>
<div class="t" style="left:378.5px;width:180.3px;text-align:center;top:313px;font-size:12px;color:#000;transform:translate(0,0.895px);transform-origin:50% 0">16 Mei 2019 - 13:32</div>
<div class="t" style="left:557.8px;width:108.4px;text-align:center;top:313px;font-size:12px;color:#000;transform:translate(0,0.895px);transform-origin:50% 0">A-0001</div>
<div class="t" style="left:670px;top:313px;font-size:12px;color:#000;transform:translate(0.4px,0.895px);transform-origin:0 0">Yatti Surtiyati Arief</div>
<div class="t" style="left:849px;top:313px;font-size:12px;color:#000;transform:translate(0.0px,0.895px);transform-origin:0 0">Simpanan Wajib</div>
<div class="t" style="right:259.0px;top:313px;font-size:12px;color:#000;transform:translate(0,0.895px);transform-origin:100% 0">50,000</div>
<div class="t" style="left:1094.7px;width:108.3px;text-align:center;top:313px;font-size:12px;color:#000;transform:translate(0,0.895px);transform-origin:50% 0">admin</div>
<div class="t" style="left:231.2px;width:27.0px;text-align:center;top:338px;font-size:12px;color:#000;transform:translate(0,0.873px);transform-origin:50% 0">6</div>
<div class="t" style="left:257.2px;width:122.3px;text-align:center;top:338px;font-size:12px;color:#000;transform:translate(0,0.873px);transform-origin:50% 0">TRD00003</div>
<div class="t" style="left:378.5px;width:180.3px;text-align:center;top:338px;font-size:12px;color:#000;transform:translate(0,0.873px);transform-origin:50% 0">16 Mei 2019 - 13:32</div>
<div class="t" style="left:557.8px;width:108.4px;text-align:center;top:338px;font-size:12px;color:#000;transform:translate(0,0.873px);transform-origin:50% 0">A-0001</div>
<div class="t" style="left:670px;top:338px;font-size:12px;color:#000;transform:translate(0.4px,0.873px);transform-origin:0 0">Yatti Surtiyati Arief</div>
<div class="t" style="left:849px;top:338px;font-size:12px;color:#000;transform:translate(0.0px,0.873px);transform-origin:0 0">Simpanan Berjangka</div>
<div class="t" style="right:259.0px;top:338px;font-size:12px;color:#000;transform:translate(0,0.873px);transform-origin:100% 0">10,000,000</div>
<div class="t" style="left:1094.7px;width:108.3px;text-align:center;top:338px;font-size:12px;color:#000;transform:translate(0,0.873px);transform-origin:50% 0">admin</div>
<div class="t" style="left:246px;top:367px;font-size:12px;color:#111;transform:translate(0px,0.628px);transform-origin:0 0">10</div>
<div class="t" style="left:353px;top:367px;font-size:12px;color:#111;transform:translate(0px,0.628px);transform-origin:0 0">Page</div>
<div class="t" style="left:386px;top:367px;font-size:12px;color:#111;transform:translate(0.5px,0.628px);transform-origin:0 0">1</div>
<div class="t" style="left:415px;top:367px;font-size:12px;color:#111;transform:translate(0.3px,0.628px);transform-origin:0 0">of 1</div>
<div class="t" style="right:24.2px;top:367px;font-size:12px;color:#111;transform:translate(0,0.781px);transform-origin:100% 0">Displaying 1 to 6 of 6 items</div>
</div>
</body></html>
